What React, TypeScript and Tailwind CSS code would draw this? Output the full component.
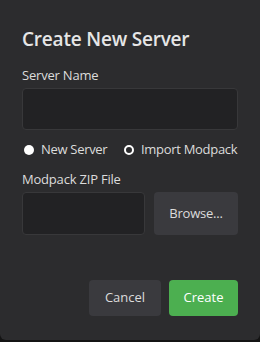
import React from "react";

export default function App() {
  return (
    <div className="w-[260px] h-[342px] bg-[#141414]" style={{ fontFamily: '"Open Sans", "Noto Sans", sans-serif' }}>
      <div className="w-[260px] h-[340px] bg-[#2c2c2e] rounded-b-[6px] px-[22px] pt-[26px] flex flex-col">
        <h1 className="text-[19px] font-semibold text-[#e6e6e6] leading-[26px] tracking-[-0.2px] whitespace-nowrap">Create New Server</h1>
        <label className="mt-[14px] text-[13px] text-[#dcdcdc] leading-[18px] tracking-[-0.2px]">Server Name</label>
        <div className="mt-[4px] h-[42px] w-[216px] rounded-[4px] bg-[#222224] border border-[#38383a]" />
        <div className="mt-[11px] flex items-center h-[18px] text-[13px] text-[#dcdcdc] whitespace-nowrap tracking-[-0.3px]">
          <span className="ml-[2px] w-[10px] h-[10px] rounded-full bg-white shrink-0" />
          <span className="ml-[7px] w-[83px] shrink-0">New Server</span>
          <span className="w-[10px] h-[10px] rounded-full border-[2.5px] border-white bg-[#2c2c2e] shrink-0" />
          <span className="ml-[7px]">Import Modpack</span>
        </div>
        <label className="mt-[11px] text-[13px] text-[#dcdcdc] leading-[18px] tracking-[-0.2px]">Modpack ZIP File</label>
        <div className="mt-[4px] flex gap-[9px]">
          <div className="h-[43px] w-[123px] rounded-[4px] bg-[#222224] border border-[#38383a]" />
          <button className="h-[43px] w-[84px] rounded-[4px] bg-[#3a3a3e] text-[13px] text-[#dcdcdc] tracking-[-0.2px]">Browse...</button>
        </div>
        <div className="mt-[45px] flex justify-end gap-[8px]">
          <button className="h-[36px] w-[72px] rounded-[4px] bg-[#3a3a3e] text-[13px] text-[#dcdcdc]">Cancel</button>
          <button className="h-[36px] w-[69px] rounded-[4px] bg-[#4caf50] text-[13px] text-white">Create</button>
        </div>
      </div>
    </div>
  );
}
